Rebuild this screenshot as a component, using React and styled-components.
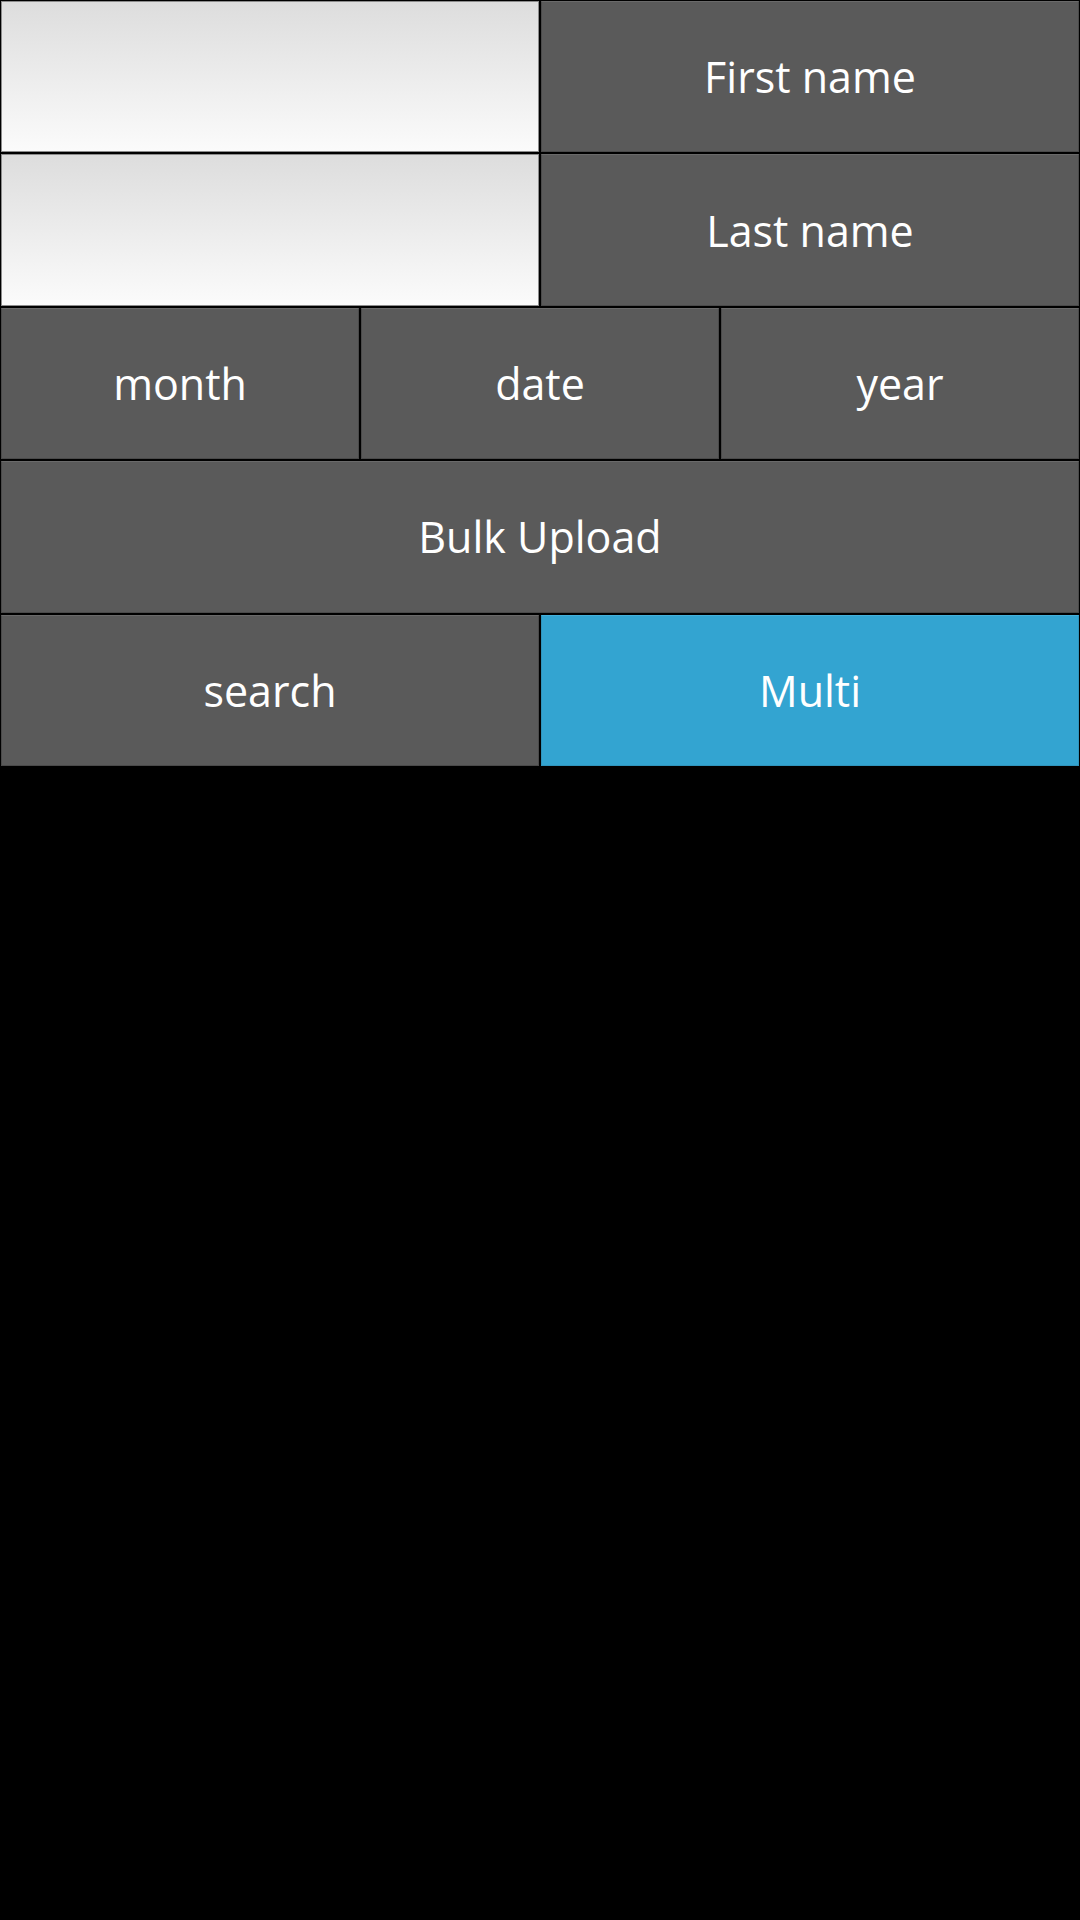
import React from 'react'
import styled, { createGlobalStyle } from 'styled-components'

const GlobalStyle = createGlobalStyle`
  html, body {
    margin: 0;
    padding: 0;
    background: #000;
  }
  body {
    width: 1080px;
    height: 1920px;
    font-family: "Open Sans", "Noto Sans", sans-serif;
  }
`

const Form = styled.div`
  width: 1080px;
  display: flex;
  flex-direction: column;
`

const Row = styled.div`
  display: flex;
  height: 153.4px;
`

const Field = styled.input`
  flex: 1 1 0;
  min-width: 0;
  margin: 1px;
  padding: 0;
  box-sizing: border-box;
  border: 1px solid #8c8c8c;
  background: linear-gradient(to bottom, #dddddd 0%, #fbfbfb 100%);
  font-family: inherit;
  font-size: 43px;
  outline: none;
`

const Button = styled.button`
  flex: 1 1 0;
  min-width: 0;
  margin: 1px;
  box-sizing: border-box;
  border: 1px solid ${p => (p.active ? '#2f94bd' : '#4a4a4a')};
  border-top-color: ${p => (p.active ? '#45b0da' : '#6a6a6a')};
  background: ${p => (p.active ? '#33a4d1' : '#5a5a5a')};
  color: #fff;
  font-family: inherit;
  font-size: 43px;
  padding: 0;
  cursor: pointer;
`

export default function App() {
  return (
    <>
      <GlobalStyle />
      <Form>
        <Row>
          <Field />
          <Button>First name</Button>
        </Row>
        <Row>
          <Field />
          <Button>Last name</Button>
        </Row>
        <Row>
          <Button>month</Button>
          <Button>date</Button>
          <Button>year</Button>
        </Row>
        <Row>
          <Button>Bulk Upload</Button>
        </Row>
        <Row>
          <Button>search</Button>
          <Button active>Multi</Button>
        </Row>
      </Form>
    </>
  )
}
